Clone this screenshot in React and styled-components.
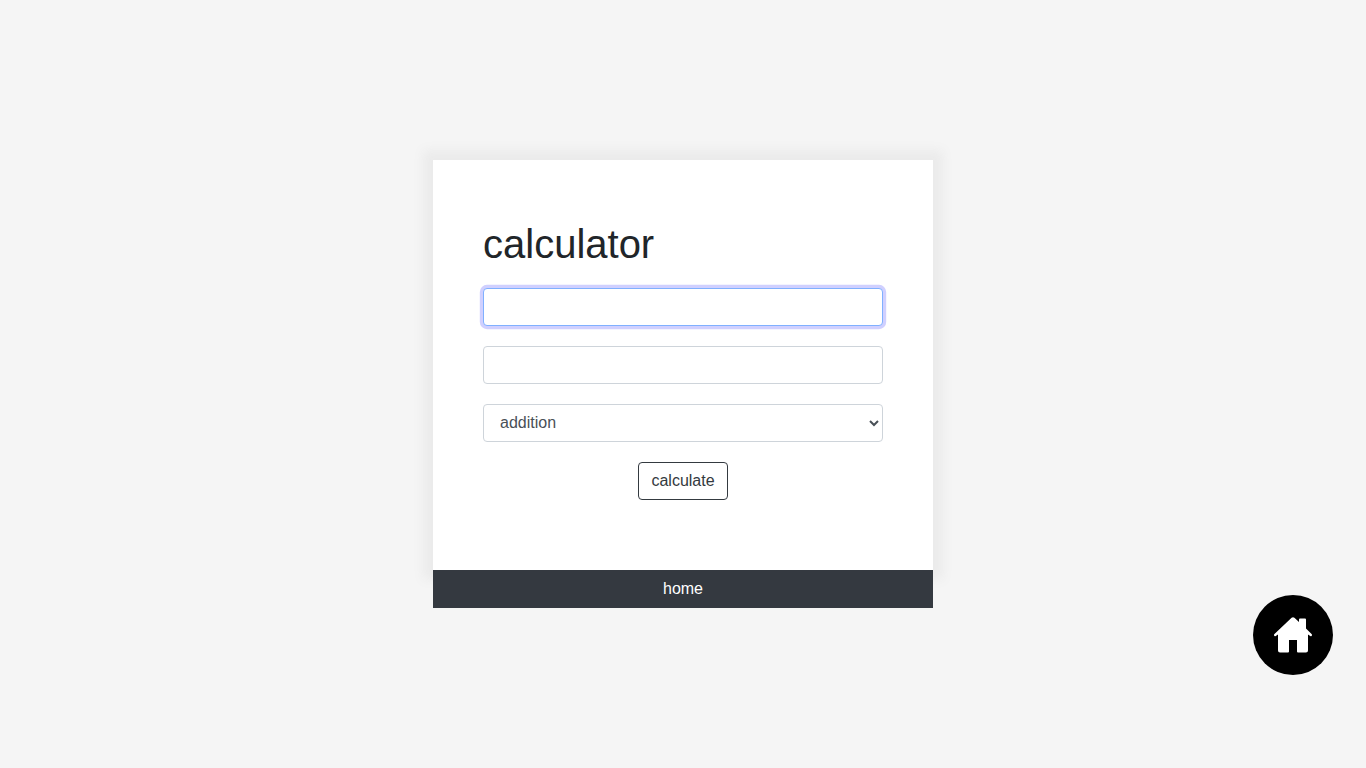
import React from "react";
import styled, { createGlobalStyle } from "styled-components";

const GlobalStyle = createGlobalStyle`
  *, *::before, *::after { box-sizing: border-box; }
  body {
    margin: 0;
    background: #f5f5f5;
    color: #212529;
    font: 400 16px/1.5 "Liberation Sans", Arial, sans-serif;
  }
`;

const Page = styled.div`
  position: relative;
  display: flex;
  flex-direction: column;
  align-items: center;
  justify-content: center;
  height: 100vh;
  overflow: hidden;
`;

const Card = styled.form`
  display: flex;
  flex-direction: column;
  gap: 20px;
  width: 500px;
  height: 410px;
  padding: 60px 50px 0;
  background: #fff;
  box-shadow: 0 0 10px 10px #ebebeb;
`;

const Title = styled.h1`
  margin: 0;
  font-size: 40px;
  font-weight: 500;
  line-height: 48px;
`;

const controlStyles = `
  display: block;
  width: 100%;
  height: 38px;
  padding: 6px 12px;
  border: 1px solid #ced4da;
  border-radius: 4px;
  background-color: #fff;
  color: #495057;
  font: inherit;
  &:focus {
    outline: 0;
    border-color: #80b0ff;
    box-shadow: 0 0 0 3.2px #d0d0ff;
  }
`;

const Input = styled.input`
  ${controlStyles}
  caret-color: transparent;
`;

const Select = styled.select`
  ${controlStyles}
  padding: 5px 12px 7px;
`;

const Button = styled.button`
  align-self: center;
  height: 38px;
  padding: 6px 12px;
  border: 1px solid #343a40;
  border-radius: 4px;
  background: transparent;
  color: #343a40;
  font: inherit;
`;

const HomeBar = styled.a`
  width: 500px;
  height: 38px;
  padding: 7px 12px;
  background: #343940;
  color: #fff;
  text-align: center;
  text-decoration: none;
`;

const HomeBadge = styled.a`
  position: absolute;
  right: 33px;
  bottom: 93px;
  display: flex;
  align-items: center;
  justify-content: center;
  width: 80px;
  height: 80px;
  border-radius: 50%;
  background: #000;
  color: #fff;
`;

export default function App() {
  return (
    <>
      <GlobalStyle />
      <Page>
        <Card>
          <Title>calculator</Title>
          <Input type="text" autoFocus />
          <Input type="text" />
          <Select defaultValue="addition">
            <option>addition</option>
            <option>subtraction</option>
            <option>multiplication</option>
            <option>division</option>
          </Select>
          <Button type="button">calculate</Button>
        </Card>
        <HomeBar href="#">home</HomeBar>
        <HomeBadge href="#" aria-label="home">
          <svg width="40" height="40" viewBox="0 0 40 40" fill="currentColor">
            <path d="M18.600 2.700 Q20 1.600 21.400 2.700 L26 7 V4.500 Q26 3.500 27 3.500 H32 Q33 3.500 33 4.500 V13.500 L38.800 19.200 Q39.500 20.200 38.500 21 Q37.500 21.600 36.500 20.500 L35 19.500 V35.500 Q35 37.500 33 37.500 H25 Q24 37.500 24 36.500 V25 H16 V36.500 Q16 37.500 15 37.500 H7 Q5 37.500 5 35.500 V19.500 L3.500 20.500 Q2.500 21.600 1.500 21 Q.5 20.200 1.200 19.200Z" />
          </svg>
        </HomeBadge>
      </Page>
    </>
  );
}
